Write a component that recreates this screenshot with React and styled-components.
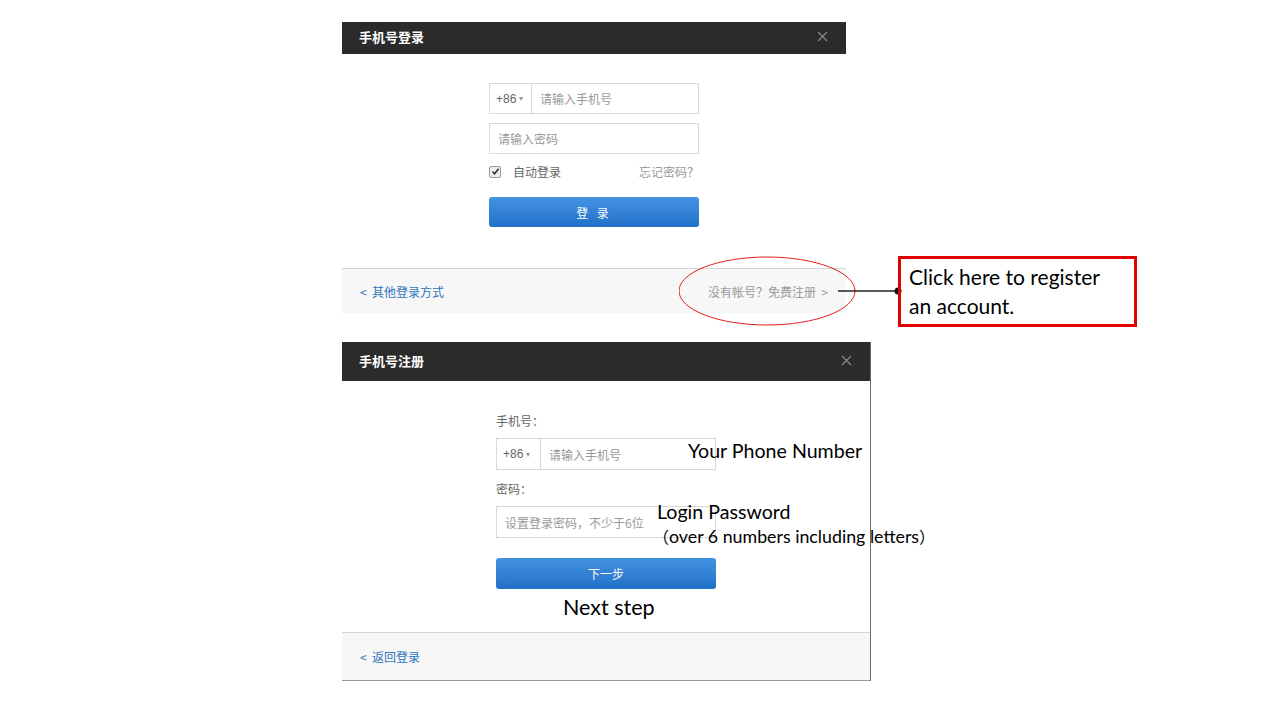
import React from "react";
import styled, { createGlobalStyle } from "styled-components";

const Global = createGlobalStyle`
  html, body { margin: 0; padding: 0; background: #fff; }
  body { font-family: "Liberation Sans", "Noto Sans CJK SC", sans-serif; }
`;

function CloseIcon() {
  return (
    <svg width="11" height="11" viewBox="0 0 11 11">
      <path d="M1 1L10 10M10 1L1 10" stroke="#8a8a8a" strokeWidth="1.2" />
    </svg>
  );
}

function CheckBox() {
  return (
    <Check>
      <svg width="9" height="9" viewBox="0 0 9 9">
        <path d="M1.5 4.5L3.6 6.8L7.6 1.8" stroke="#333" strokeWidth="1.6" fill="none" />
      </svg>
    </Check>
  );
}

function PhoneField({ placeholder, wide, gap, h }) {
  return (
    <Field gap={gap} h={h}>
      <Prefix wide={wide}>
        +86 <Caret>▾</Caret>
      </Prefix>
      <Placeholder>{placeholder}</Placeholder>
    </Field>
  );
}

export default function App() {
  return (
    <Stage>
      <Global />
      <Column>
        <Dialog width={504}>
          <Header height={32}>
            <Title>手机号登录</Title>
            <CloseIcon />
          </Header>
          <Body height={214}>
            <Form width={210} top={29}>
              <PhoneField placeholder="请输入手机号" gap={9} h={29} />
              <Field gap={9} h={29}>
                <Placeholder>请输入密码</Placeholder>
              </Field>
              <OptionRow>
                <AutoLogin>
                  <CheckBox />
                  自动登录
                </AutoLogin>
                <Muted>忘记密码？</Muted>
              </OptionRow>
              <Button spaced h={30}>登 录</Button>
            </Form>
          </Body>
          <Footer height={45}>
            <Link>&lt;&nbsp;&nbsp;其他登录方式</Link>
            <Muted>没有帐号？免费注册&nbsp;&nbsp;&gt;</Muted>
          </Footer>
        </Dialog>

        <Dialog width={529} second>
          <Header height={39}>
            <Title>手机号注册</Title>
            <CloseIcon />
          </Header>
          <Body height={251}>
            <Form width={220} top={33}>
              <Label>手机号：</Label>
              <PhoneField placeholder="请输入手机号" wide gap={12} h={30} />
              <Label>密码：</Label>
              <Field gap={12} h={30}>
                <Placeholder>设置登录密码，不少于6位</Placeholder>
              </Field>
              <Button h={31}>下一步</Button>
            </Form>
          </Body>
          <Footer height={49} bordered>
            <Link>&lt;&nbsp;&nbsp;返回登录</Link>
          </Footer>
        </Dialog>
      </Column>

      <Callout>
        <svg width="300" height="80" viewBox="0 0 300 80">
          <ellipse cx="88" cy="35" rx="88" ry="34" fill="none" stroke="#e02020" strokeWidth="1" />
          <line x1="159" y1="35" x2="219" y2="35" stroke="#222" strokeWidth="1.3" />
          <circle cx="219" cy="35" r="3.5" fill="#111" />
        </svg>
      </Callout>
      <NoteBox>
        Click here to register
        <br />
        an account.
      </NoteBox>
      <Note x={688} y={439} size={19.6}>Your Phone Number</Note>
      <Note x={657} y={500} size={19.6}>Login Password</Note>
      <Note x={653} y={524} size={17.8}>
        <Paren>（</Paren>over 6 numbers including letters<Paren>）</Paren>
      </Note>
      <Note x={563} y={594} size={21.5}>Next step</Note>
    </Stage>
  );
}

const Stage = styled.div`
  position: relative;
  width: 1280px;
  height: 720px;
  overflow: hidden;
`;

const Column = styled.div`
  display: flex;
  flex-direction: column;
  gap: 29px;
  padding: 22px 0 0 342px;
`;

const Dialog = styled.div`
  width: ${(p) => p.width}px;
  background: #fff;
  border-right: ${(p) => (p.second ? "1px solid #6b6b6b" : "none")};
  box-sizing: border-box;
`;

const Header = styled.div`
  height: ${(p) => p.height}px;
  box-sizing: border-box;
  background: #2b2b2b;
  display: flex;
  align-items: center;
  justify-content: space-between;
  padding: 0 18px 3px 17px;
`;

const Title = styled.span`
  color: #fff;
  font-size: 13px;
  font-weight: bold;
  font-family: "Noto Sans CJK SC", sans-serif;
`;

const Body = styled.div`
  height: ${(p) => p.height}px;
  display: flex;
  justify-content: center;
`;

const Form = styled.div`
  width: ${(p) => p.width}px;
  padding-top: ${(p) => p.top}px;
  display: flex;
  flex-direction: column;
`;

const Field = styled.div`
  height: ${(p) => p.h}px;
  border: 1px solid #d9d9d9;
  display: flex;
  align-items: center;
  margin-bottom: ${(p) => p.gap}px;
  font-size: 12px;
`;

const Prefix = styled.div`
  height: 100%;
  width: ${(p) => (p.wide ? 44 : 42)}px;
  box-sizing: border-box;
  border-right: 1px solid #d9d9d9;
  display: flex;
  align-items: center;
  padding-left: 6px;
  color: #666;
  font-size: 12px;
`;

const Caret = styled.span`
  font-size: 8px;
  color: #999;
  margin-left: 3px;
`;

const Placeholder = styled.span`
  color: #999;
  padding-left: 8px;
  font-size: 12px;
  font-family: "Noto Sans CJK SC", sans-serif;
`;

const OptionRow = styled.div`
  display: flex;
  justify-content: space-between;
  align-items: center;
  font-size: 12px;
  margin: 0 0 17px;
`;

const AutoLogin = styled.span`
  display: flex;
  align-items: center;
  gap: 12px;
  color: #666;
  font-family: "Noto Sans CJK SC", sans-serif;
`;

const Check = styled.span`
  width: 10px;
  height: 10px;
  border: 1px solid #999;
  border-radius: 2px;
  background: #eee;
  display: flex;
  align-items: center;
  justify-content: center;
`;

const Muted = styled.span`
  color: #999;
  font-size: 12px;
  font-family: "Noto Sans CJK SC", sans-serif;
`;

const Link = styled.span`
  color: #2f74c0;
  font-size: 12px;
  font-family: "Noto Sans CJK SC", sans-serif;
`;

const Label = styled.div`
  color: #666;
  font-size: 12px;
  line-height: 14px;
  margin-bottom: 10px;
  font-family: "Noto Sans CJK SC", sans-serif;
`;

const Button = styled.div`
  height: ${(p) => p.h}px;
  margin-top: ${(p) => (p.spaced ? 0 : 8)}px;
  border-radius: 3px;
  background: linear-gradient(#4493e2, #2170c8);
  color: #fff;
  font-size: 12px;
  display: flex;
  align-items: center;
  justify-content: center;
  letter-spacing: ${(p) => (p.spaced ? "3px" : "0")};
  font-family: "Noto Sans CJK SC", sans-serif;
`;

const Footer = styled.div`
  height: ${(p) => p.height}px;
  box-sizing: border-box;
  background: #f7f7f7;
  border-top: 1px solid #d6d6d6;
  border-bottom: ${(p) => (p.bordered ? "1px solid #9a9a9a" : "none")};
  display: flex;
  align-items: center;
  justify-content: space-between;
  padding: 0 18px;
`;

const Callout = styled.div`
  position: absolute;
  left: 679px;
  top: 256px;
`;

const NoteBox = styled.div`
  position: absolute;
  left: 898px;
  top: 256px;
  width: 239px;
  height: 71px;
  box-sizing: border-box;
  border: 3px solid #e00000;
  padding: 3px 0 0 8px;
  font-family: Lato, "Open Sans", sans-serif;
  font-size: 21px;
  line-height: 29px;
  color: #000;
`;

const Note = styled.div`
  position: absolute;
  left: ${(p) => p.x}px;
  top: ${(p) => p.y}px;
  font-family: Lato, "Open Sans", sans-serif;
  font-size: ${(p) => p.size}px;
  color: #000;
  white-space: nowrap;
`;

const Paren = styled.span`
  font-family: "Noto Sans CJK SC", sans-serif;
  font-size: 16px;
`;
